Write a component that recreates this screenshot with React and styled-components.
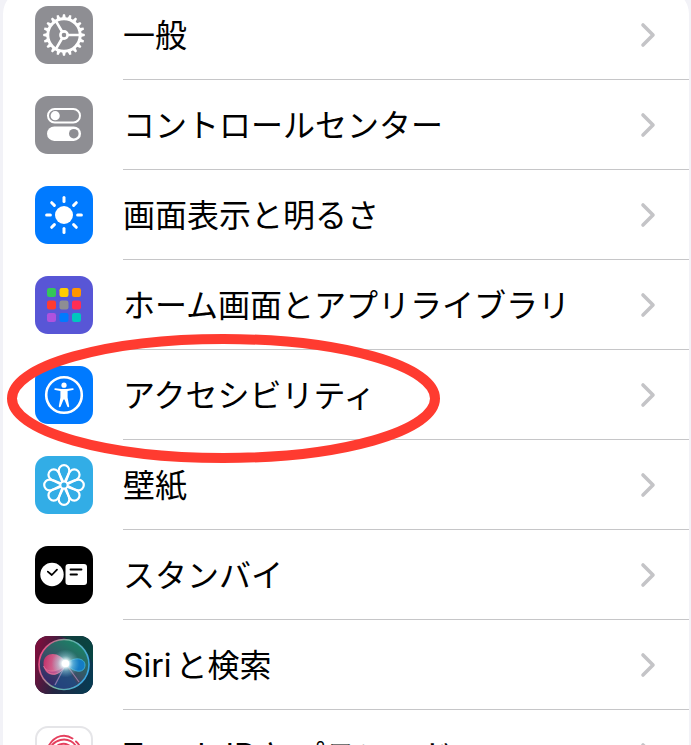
import React from "react";
import styled, { createGlobalStyle } from "styled-components";

const GlobalStyle = createGlobalStyle`
  * { box-sizing: border-box; }
  html, body { margin: 0; background: #f2f2f7; }
`;

const Screen = styled.main`
  height: 100vh;
  overflow: hidden;
  padding: 0 2px 0 3px;
  background: #f2f2f7;
  font-family: Inter, "Noto Sans CJK JP", sans-serif;
`;

/* The list is scrolled slightly past its top edge. */
const List = styled.ul`
  list-style: none;
  margin: -10px 0 0;
  padding: 0;
  background: #fff;
  border-radius: 24px;
`;

const Item = styled.li`
  position: relative;
`;

const RowLink = styled.a`
  display: flex;
  align-items: stretch;
  height: 90px;
  padding-left: 32px;
  gap: 30px;
  color: #000;
  text-decoration: none;
`;

const IconTile = styled.span`
  flex: none;
  align-self: center;
  width: 58px;
  height: 58px;
  border-radius: 13px;
  overflow: hidden;
  background: ${(p) => p.$color};
  border: ${(p) => (p.$outlined ? "2px solid #e5e5e8" : "none")};

  svg { display: block; width: 100%; height: 100%; }
`;

const RowBody = styled.span`
  flex: 1;
  min-width: 0;
  display: flex;
  align-items: center;
  justify-content: space-between;
  padding-right: 33px;
  border-bottom: 1px solid #c6c6c8;
`;

const Label = styled.span`
  padding-top: 2px;
  font-size: 32px;
  font-weight: 400;
  line-height: 48px;
  white-space: nowrap;
  text-autospace: normal;
`;

const ChevronIcon = styled.svg`
  flex: none;
  width: 16px;
  height: 26px;
`;

const Highlight = styled.svg`
  position: absolute;
  left: 4px;
  top: -16px;
  width: 433px;
  height: 129px;
  pointer-events: none;
  z-index: 1;
`;

const range = (n) => Array.from({ length: n }, (_, i) => i);

const Gear = () => (
  <svg viewBox="0 0 58 58" fill="none" stroke="#fff">
    <circle cx="29" cy="29" r="16.2" strokeWidth="3" />
    {range(20).map((i) => (
      <path key={i} d="M27.1 12.2 L28 8.2 H30 L30.9 12.2Z" fill="#fff" stroke="none" transform={`rotate(${i * 18} 29 29)`} />
    ))}
    <circle cx="29" cy="29" r="3.6" strokeWidth="2.6" />
    <path d="M33 29H45M27 25.5L20.8 14.8M27 32.5L20.8 43.2" strokeWidth="2.6" />
  </svg>
);

const Toggles = () => (
  <svg viewBox="0 0 58 58">
    <rect x="13" y="13" width="32" height="13.4" rx="6.7" fill="none" stroke="#fff" strokeWidth="2" />
    <circle cx="20.2" cy="19.7" r="4.6" fill="#fff" />
    <rect x="12" y="30.4" width="34" height="14.6" rx="7.3" fill="#fff" />
    <circle cx="38.8" cy="37.7" r="4.8" fill="#8e8e93" />
  </svg>
);

const Sun = () => (
  <svg viewBox="0 0 58 58">
    <circle cx="29" cy="29" r="9" fill="#fff" />
    {range(8).map((i) => (
      <path key={i} d="M29 11.6V15.4" stroke="#fff" strokeWidth="3" strokeLinecap="round" transform={`rotate(${i * 45} 29 29)`} />
    ))}
  </svg>
);

const gridColors = ["#34c759", "#ffcc00", "#ff9500", "#ff3b30", "#8e8e93", "#ff2d55", "#af52de", "#007aff", "#00c7be"];
const AppGrid = () => (
  <svg viewBox="0 0 58 58">
    {gridColors.map((c, i) => (
      <rect key={c} x={12 + (i % 3) * 12.5} y={12 + Math.floor(i / 3) * 12.5} width="9" height="9" rx="2.2" fill={c} />
    ))}
  </svg>
);

const Person = () => (
  <svg viewBox="0 0 58 58">
    <circle cx="29" cy="29" r="17.8" fill="none" stroke="#fff" strokeWidth="2.6" />
    <circle cx="29" cy="19.2" r="2.6" fill="#fff" />
    <path
      d="M20.3 22.2L26.4 23H31.6L37.7 22.2Q38.7 22.2 38.7 23.1Q38.7 23.9 37.8 24.1L32.6 25V31.4L34.2 40.2Q34.2 41.2 33.4 41.3Q32.7 41.3 32.3 40.5L29.5 33.6H28.5L25.7 40.5Q25.3 41.3 24.6 41.3Q23.8 41.2 23.8 40.2L25.4 31.4V25L20.2 24.1Q19.3 23.9 19.3 23.1Q19.3 22.2 20.3 22.2Z"
      fill="#fff"
    />
  </svg>
);

const Flower = () => (
  <svg viewBox="0 0 58 58" fill="none" stroke="#fff">
    {range(8).map((i) => (
      <path
        key={i}
        d="M27.4 26.8C26.5 22.6 23.7 18 23.7 14.5A5.3 5.3 0 0 1 34.3 14.5C34.3 18 31.5 22.6 30.6 26.8"
        strokeWidth="2.2"
        transform={`rotate(${i * 45} 29 29)`}
      />
    ))}
    <circle cx="29" cy="29" r="3.4" fill="#32ade6" strokeWidth="1.6" />
  </svg>
);

const Standby = () => (
  <svg viewBox="0 0 58 58">
    <circle cx="17" cy="28.5" r="11.7" fill="#fff" />
    <path d="M12.8 25.6L16.8 29L22 23.6" fill="none" stroke="#000" strokeWidth="1.8" strokeLinecap="round" strokeLinejoin="round" />
    <rect x="30.5" y="18" width="21.5" height="21" rx="3" fill="#fff" />
    <path d="M35.5 23.5H46.5M35.5 28.5H42" stroke="#000" strokeWidth="1.8" strokeLinecap="round" />
  </svg>
);

const Siri = () => (
  <svg viewBox="0 0 58 58">
    <defs>
      <linearGradient id="siriBase" x1="0" y1=".35" x2="1" y2=".65">
        <stop offset="0" stopColor="#7a0f3c" />
        <stop offset=".45" stopColor="#252542" />
        <stop offset="1" stopColor="#083b52" />
      </linearGradient>
      <linearGradient id="siriOrb" x1=".1" y1=".9" x2=".7" y2="0">
        <stop offset="0" stopColor="#35216a" />
        <stop offset=".5" stopColor="#385366" />
        <stop offset="1" stopColor="#198466" />
      </linearGradient>
      <linearGradient id="siriRing" x1="0" y1=".4" x2="1" y2=".7">
        <stop offset="0" stopColor="#ec4b83" />
        <stop offset=".45" stopColor="#6fb5a2" />
        <stop offset="1" stopColor="#36a5e7" />
      </linearGradient>
      <linearGradient id="siriPink" x1="0" y1="0" x2="1" y2=".2">
        <stop offset="0" stopColor="#cf2a66" />
        <stop offset="1" stopColor="#f39bbb" />
      </linearGradient>
      <radialGradient id="siriGlow">
        <stop offset="0" stopColor="#fff" />
        <stop offset=".25" stopColor="#f2ffff" stopOpacity=".95" />
        <stop offset=".55" stopColor="#a8e5ec" stopOpacity=".45" />
        <stop offset="1" stopColor="#7ad2e2" stopOpacity="0" />
      </radialGradient>
    </defs>
    <rect width="58" height="58" fill="url(#siriBase)" />
    <path d="M24 0H58V27C50 10 38 4 24 0Z" fill="#064d3c" opacity=".65" />
    <circle cx="29" cy="28.5" r="25" fill="url(#siriOrb)" stroke="url(#siriRing)" strokeWidth="1.6" />
    <path d="M30 28L42 48Q30 56 18 50Z" fill="#1d4d86" opacity=".7" />
    <path d="M31 28C26 15 9 15 8.5 27C8 41 24 44 31 28Z" fill="url(#siriPink)" opacity=".9" />
    <path d="M8.5 30C12 38 24 36 31 28C26 40 14 42 8.5 30Z" fill="#b5478c" opacity=".7" stroke="#f188a9" strokeWidth=".7" />
    <path d="M31 28C39 20 50 22 50 29C50 37 40 38 31 28Z" fill="#137fd0" opacity=".9" stroke="#45c3e7" strokeWidth=".8" />
    <path d="M31 28L20 49M31 28L44 46" fill="none" stroke="#d693c6" strokeWidth="1.2" opacity=".6" />
    <circle cx="30.5" cy="27.5" r="14" fill="url(#siriGlow)" />
    <circle cx="30.5" cy="27.5" r="3.6" fill="#fff" />
  </svg>
);

const Fingerprint = () => (
  <svg viewBox="2 2 54 54" fill="none" stroke="#e5405e" strokeWidth="1.9" strokeLinecap="round">
    <path d="M13 21C20 8 31 8 37.5 12.5M41 15.5C45 19 47 24 47 30" />
    <path d="M13 34C11 11 38 7 42.5 24C43.5 30 43 36 42 42" />
    <path d="M17 39C13 15 35 13 38 25C39 32 38 38 36 44" />
    <path d="M22 42C16 21 31 17 33.5 27C34 34 32 40 31 45" />
    <path d="M27 44C27 38 24 30 27 28C32 27 28 38 27 44" />
  </svg>
);

const Chevron = () => (
  <ChevronIcon viewBox="0 0 16 26" fill="none" stroke="#c4c4c7" strokeWidth="3.6" strokeLinecap="round" strokeLinejoin="round" aria-hidden="true">
    <path d="M3 3L13 13L3 23" />
  </ChevronIcon>
);

const settings = [
  { id: "general", label: "一般", color: "#8e8e93", Icon: Gear },
  { id: "control-center", label: "コントロールセンター", color: "#8e8e93", Icon: Toggles },
  { id: "display", label: "画面表示と明るさ", color: "#007aff", Icon: Sun },
  { id: "home-screen", label: "ホーム画面とアプリライブラリ", color: "#5856d6", Icon: AppGrid },
  { id: "accessibility", label: "アクセシビリティ", color: "#007aff", Icon: Person, highlighted: true },
  { id: "wallpaper", label: "壁紙", color: "#32ade6", Icon: Flower },
  { id: "standby", label: "スタンバイ", color: "#000", Icon: Standby },
  { id: "siri", label: "Siriと検索", color: "#202040", Icon: Siri },
  { id: "touch-id", label: "Touch IDとパスコード", color: "#fff", Icon: Fingerprint, outlined: true },
];

export default function App() {
  return (
    <Screen>
      <GlobalStyle />
      <List>
        {settings.map(({ id, label, color, Icon, highlighted, outlined }) => (
          <Item key={id}>
            <RowLink href={`#${id}`}>
              <IconTile $color={color} $outlined={outlined} aria-hidden="true">
                <Icon />
              </IconTile>
              <RowBody>
                <Label>{label}</Label>
                <Chevron />
              </RowBody>
            </RowLink>
            {highlighted && (
              <Highlight viewBox="0 0 433 129" aria-hidden="true">
                <ellipse cx="216.5" cy="64.5" rx="211.5" ry="59.5" fill="none" stroke="#ff3b30" strokeWidth="10" />
              </Highlight>
            )}
          </Item>
        ))}
      </List>
    </Screen>
  );
}
